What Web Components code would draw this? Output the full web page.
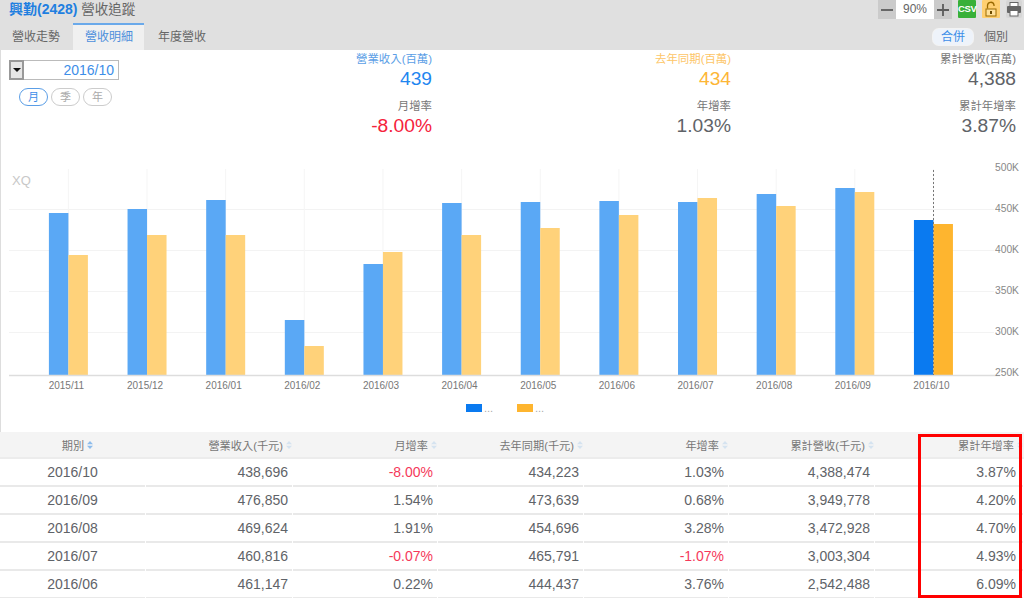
<!DOCTYPE html>
<html lang="zh-Hant">
<head>
<meta charset="utf-8">
<title>營收追蹤</title>
<style>
  html, body { margin: 0; padding: 0; background: #fff; }
  body {
    width: 1024px;
    height: 598px;
    overflow: hidden;
    font-family: "Liberation Sans", "Noto Sans CJK TC", sans-serif;
    color: #555;
    position: relative;
  }
</style>
</head>
<body>
<app-header></app-header>
<app-summary></app-summary>
<revenue-chart></revenue-chart>
<revenue-table></revenue-table>
<red-mark></red-mark>

<script>
class AppHeader extends HTMLElement {
  connectedCallback() {
    this.attachShadow({ mode: 'open' });
    this.shadowRoot.innerHTML = `
      <style>
        :host { display: block; height: 50px; background: #e0e0e0; box-sizing: border-box; }
        .top { display: flex; justify-content: space-between; height: 22px; }
        .title { font-size: 13.5px; line-height: 18px; padding-left: 9px; color: #666; white-space: nowrap; }
        .title b { color: #1f7fe0; font-weight: bold; font-size: 14px; }
        .tools { display: flex; align-items: flex-start; padding-right: 2px; }
        .btn { width: 18px; height: 19px; background: #cbcbcb; display: flex; align-items: center; justify-content: center; }
        .zoom { width: 38px; height: 19px; background: #fff; font-size: 12px; line-height: 19px; text-align: center; color: #666; }
        .csv { background: #38b038; color: #fff; font-size: 9.5px; letter-spacing: -.4px; font-weight: bold; width: 18px; height: 18px; line-height: 18px; text-align: center; margin-left: 6px; border-radius: 1px; }
        .lock { background: #ffcf70; margin-left: 6px; height: 18px; border-radius: 1px; }
        .print { background: #d6d6d6; margin-left: 6px; width: 16px; height: 18px; border-radius: 2px; }
        .bottom { display: flex; justify-content: space-between; align-items: flex-end; height: 28px; }
        .tabs { display: flex; }
        .tab { font-size: 12px; line-height: 25px; height: 25px; color: #666; border-top: 2px solid transparent; padding: 0 13px 0 12px; }
        .tab.on { background: #f0f0f0; color: #4d8fdc; border-top-color: #6aa9ea; padding: 0 11px 0 12px; }
        .tab.last { padding-left: 14px; }
        .group { display: flex; align-items: center; height: 28px; padding-right: 16px; padding-top: 1px; box-sizing: border-box; }
        .seg { font-size: 12px; line-height: 16px; height: 16px; color: #666; }
        .seg.on { width: 40px; text-align: center; color: #3d8ee8; background: #eef3fa; box-shadow: 0 0 0 1px #f3f3f3; border-radius: 6px; margin-right: 11px; }
      </style>
      <div class="top">
        <div class="title"><b>興勤(2428)</b> 營收追蹤</div>
        <div class="tools">
          <div class="btn"><svg width="14" height="14" viewBox="0 0 14 14"><path d="M1 7h12" stroke="#5c5c5c" stroke-width="1.8"/></svg></div>
          <div class="zoom">90%</div>
          <div class="btn"><svg width="14" height="14" viewBox="0 0 14 14"><path d="M1 7h12M7 1v12" stroke="#5c5c5c" stroke-width="1.8"/></svg></div>
          <div class="csv">CSV</div>
          <div class="btn lock"><svg width="14" height="16" viewBox="0 0 14 16"><path d="M3.5 7.5V4.4a3.3 3.3 0 0 1 6.5-.6V5" fill="none" stroke="#9a6a00" stroke-width="1.3"/><rect x="2" y="8" width="10" height="7" fill="#ffe09a" stroke="#9a6a00"/><rect x="6" y="10" width="2" height="3" fill="#6b4a00"/></svg></div>
          <div class="btn print"><svg width="16" height="16" viewBox="0 0 16 16"><rect x="4" y="1.5" width="8" height="4" fill="#fff" stroke="#666"/><rect x="1" y="5" width="14" height="7" rx="1" fill="#666"/><rect x="4" y="9.5" width="8" height="5.5" fill="#fff" stroke="#666"/></svg></div>
        </div>
      </div>
      <div class="bottom">
        <div class="tabs">
          <div class="tab">營收走勢</div>
          <div class="tab on">營收明細</div>
          <div class="tab last">年度營收</div>
        </div>
        <div class="group">
          <div class="seg on">合併</div>
          <div class="seg">個別</div>
        </div>
      </div>
    `;
  }
}
customElements.define('app-header', AppHeader);

class StatBlock extends HTMLElement {
  connectedCallback() {
    const color = this.getAttribute('color') || '#666';
    const labelColor = this.getAttribute('label-color') || '#777';
    this.attachShadow({ mode: 'open' });
    this.shadowRoot.innerHTML = `
      <style>
        :host { display: block; text-align: right; white-space: nowrap; }
        .l { font-size: 11.4px; line-height: 16px; color: ${labelColor}; }
        .v { font-size: 19.2px; line-height: 24px; color: ${color}; }
      </style>
      <div class="l">${this.getAttribute('label')}</div>
      <div class="v">${this.getAttribute('value')}</div>
    `;
  }
}
customElements.define('stat-block', StatBlock);

class AppSummary extends HTMLElement {
  connectedCallback() {
    this.attachShadow({ mode: 'open' });
    this.shadowRoot.innerHTML = `
      <style>
        :host { display: block; height: 110px; box-sizing: border-box; border-left: 1px solid #ddd; }
        .wrap { display: grid; grid-template-columns: 312px 119px 299px 285px; height: 100%; }
        .left { padding: 10px 0 0 8px; }
        .date { width: 110px; height: 20px; box-sizing: border-box; border: 1px solid #bbb; display: flex; align-items: stretch; }
        .arrow { width: 11px; background: #e6e6e6; border: 2px solid #999; margin: -1px 0 -1px -1px; display: flex; align-items: center; justify-content: center; }
        .arrow i { width: 0; height: 0; border: 4px solid transparent; border-top: 4px solid #111; border-bottom: 0; }
        .val { flex: 1; text-align: right; font-size: 14px; line-height: 18px; color: #3d8ee8; padding-right: 4px; }
        .pills { display: flex; gap: 3px; margin: 8px 0 0 10px; }
        .pill { width: 29px; height: 18px; box-sizing: border-box; border: 1px solid #ccc; border-radius: 9px; font-size: 11px; line-height: 16px; text-align: center; color: #aaa; }
        .pill.on { border: 1px solid #5b9ee6; color: #3d8ee8; }
        .col { display: flex; flex-direction: column; gap: 7px; padding-top: 1px; }
      </style>
      <div class="wrap">
        <div class="left">
          <div class="date"><div class="arrow"><i></i></div><div class="val">2016/10</div></div>
          <div class="pills"><div class="pill on">月</div><div class="pill">季</div><div class="pill">年</div></div>
        </div>
        <div class="col">
          <stat-block label="營業收入(百萬)" value="439" color="#1f86f0" label-color="#5b9ee6"></stat-block>
          <stat-block label="月增率" value="-8.00%" color="#f5223c"></stat-block>
        </div>
        <div class="col">
          <stat-block label="去年同期(百萬)" value="434" color="#fdb636" label-color="#fdc668"></stat-block>
          <stat-block label="年增率" value="1.03%" color="#5f6368"></stat-block>
        </div>
        <div class="col">
          <stat-block label="累計營收(百萬)" value="4,388" color="#5f6368"></stat-block>
          <stat-block label="累計年增率" value="3.87%" color="#5f6368"></stat-block>
        </div>
      </div>
    `;
  }
}
customElements.define('app-summary', AppSummary);

class RevenueChart extends HTMLElement {
  connectedCallback() {
    this.attachShadow({ mode: 'open' });
    // top of each bar in page px, blue then orange
    const data = [
      ['2015/11', 213, 255], ['2015/12', 209, 235], ['2016/01', 200, 235], ['2016/02', 320, 346],
      ['2016/03', 264, 252], ['2016/04', 203, 235], ['2016/05', 202, 228], ['2016/06', 201, 215],
      ['2016/07', 202, 198], ['2016/08', 194, 206], ['2016/09', 188, 192], ['2016/10', 220, 224]
    ];
    const top = 160, base = 375;
    let svg = '';
    [209, 250, 291, 332].forEach(y => {
      svg += `<line x1="9" x2="994" y1="${y + 0.5 - top}" y2="${y + 0.5 - top}" stroke="#f3f3f3"/>`;
    });
    data.forEach((d, i) => {
      const x = 68.4 + i * 78.64;
      const last = i === data.length - 1;
      svg += `<line x1="${x}" x2="${x}" y1="9" y2="${base - top}" stroke="#f5f5f5"/>`;
      svg += `<rect x="${x - 19.5}" y="${d[1] - top}" width="19.5" height="${base - d[1]}" fill="${last ? '#0a7af0' : '#5aa8f5'}"/>`;
      svg += `<rect x="${x}" y="${d[2] - top}" width="19.5" height="${base - d[2]}" fill="${last ? '#feb52f' : '#ffd27a'}"/>`;
      svg += `<text x="${x - 2}" y="${389 - top}" text-anchor="middle" class="x">${d[0]}</text>`;
    });
    svg += `<line x1="9" x2="1000" y1="${base + 0.5 - top}" y2="${base + 0.5 - top}" stroke="#ddd" stroke-width="1.5"/>`;
    svg += `<line x1="933.5" x2="933.5" y1="10" y2="${base - top}" stroke="#777" stroke-dasharray="2 2"/>`;
    ['500K', '450K', '400K', '350K', '300K', '250K'].forEach((t, i) => {
      svg += `<text x="1019" y="${171 + i * 41 - top}" text-anchor="end" class="y">${t}</text>`;
    });
    svg += `<text x="12" y="${185 - top}" class="xq">XQ</text>`;
    svg += `<rect x="466" y="${404 - top}" width="16" height="8" fill="#0a7af0"/><text x="484" y="${412 - top}" class="dots">...</text>`;
    svg += `<rect x="517" y="${404 - top}" width="16" height="8" fill="#feb52f"/><text x="535" y="${412 - top}" class="dots">...</text>`;
    this.shadowRoot.innerHTML = `
      <style>
        :host { display: block; height: 272px; }
        svg { display: block; }
        text { font-family: "Liberation Sans", sans-serif; }
        .x { font-size: 10px; fill: #777; }
        .y { font-size: 10.3px; fill: #888; }
        .xq { font-size: 13px; fill: #c8c8c8; }
        .dots { font-size: 11px; fill: #aaa; }
      </style>
      <svg width="1024" height="272" viewBox="0 0 1024 272">
        <line x1="0.5" x2="0.5" y1="0" y2="272" stroke="#ddd"/>
        ${svg}
      </svg>
    `;
  }
}
customElements.define('revenue-chart', RevenueChart);

class RevenueTable extends HTMLElement {
  connectedCallback() {
    this.attachShadow({ mode: 'open' });
    const heads = ['期別', '營業收入(千元)', '月增率', '去年同期(千元)', '年增率', '累計營收(千元)', '累計年增率'];
    const rows = [
      ['2016/10', '438,696', '-8.00%', '434,223', '1.03%', '4,388,474', '3.87%'],
      ['2016/09', '476,850', '1.54%', '473,639', '0.68%', '3,949,778', '4.20%'],
      ['2016/08', '469,624', '1.91%', '454,696', '3.28%', '3,472,928', '4.70%'],
      ['2016/07', '460,816', '-0.07%', '465,791', '-1.07%', '3,003,304', '4.93%'],
      ['2016/06', '461,147', '0.22%', '444,437', '3.76%', '2,542,488', '6.09%']
    ];
    const sort = on => `<svg class="sort" width="6" height="8" viewBox="0 0 6 8"><path d="M3 0L6 3.2H0zM3 8L0 4.8h6z" fill="${on ? '#8dbcec' : '#d5e3f0'}"/></svg>`;
    const head = heads.map((h, i) => `<div class="th${i === 0 ? ' first' : ''}">${h}${sort(i === 0)}</div>`).join('');
    const body = rows.map(r => r.map((c, i) =>
      `<div class="td${i === 0 ? ' first' : ''}${i === 6 ? ' end' : ''}${c[0] === '-' ? ' neg' : ''}">${c}</div>`).join('')).join('');
    this.shadowRoot.innerHTML = `
      <style>
        :host { display: block; }
        .grid { display: grid; grid-template-columns: 146px 147px 145px 146px 145px 146px 149px; }
        .th { height: 25px; background: #f4f4f4; border-bottom: 2px solid #ececec; font-size: 11.2px; text-align: right; color: #777; padding-right: 1px; white-space: nowrap; display: flex; justify-content: flex-end; align-items: center; gap: 3px; }
        .th:last-child { padding-right: 4px; }
        .th.first { justify-content: center; padding: 0 0 0 9px; }
        .sort { flex: none; }
        .td { height: 26px; margin-right: 1px; border-bottom: 2px solid #e9e9e9; font-size: 14px; line-height: 26px; text-align: right; color: #5f6368; padding-right: 4px; }
        .td.first { text-align: center; padding-right: 0; }
        .td.end { padding-right: 7px; }
        .neg { color: #f5395a; }
      </style>
      <div class="grid">${head}${body}</div>
    `;
  }
}
customElements.define('revenue-table', RevenueTable);

class RedMark extends HTMLElement {
  connectedCallback() {
    this.attachShadow({ mode: 'open' });
    this.shadowRoot.innerHTML = `
      <style>
        :host { position: absolute; left: 918px; top: 434px; width: 104px; height: 164px; box-sizing: border-box; border: 3px solid #f00; }
      </style>
    `;
  }
}
customElements.define('red-mark', RedMark);
</script>
</body>
</html>
